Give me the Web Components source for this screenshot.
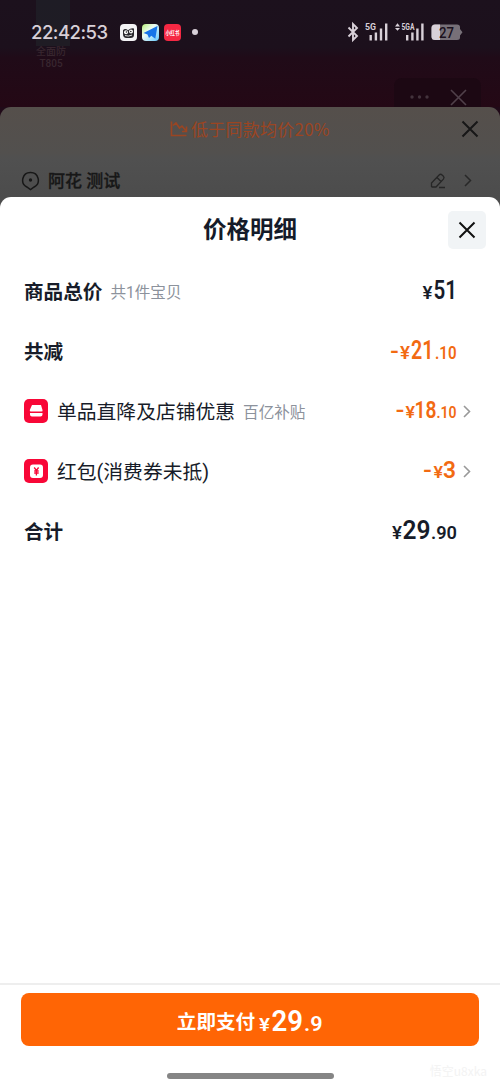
<!DOCTYPE html>
<html lang="zh-CN"><head><meta charset="utf-8"><title>价格明细</title>
<style>
html,body{margin:0;background:#200a18}
body{font-family:Roboto,"Noto Sans CJK SC",sans-serif;width:500px;height:1089px;overflow:hidden}
</style></head><body><price-page></price-page>
<script>
const define=(name,html)=>{
  const t=document.createElement('template');t.innerHTML=html;
  customElements.define(name,class extends HTMLElement{
    constructor(){super();this.attachShadow({mode:'open'}).append(t.content.cloneNode(true));}
  });
};
define('status-bar',`<style>
:host{display:flex;height:64px;align-items:center;padding:0 37px 0 31px;box-sizing:border-box;color:#d8d0d8;position:relative}
time{font:500 18.500px/24px Inter,sans-serif;width:78px;letter-spacing:-.5px;white-space:nowrap}
.apps{display:flex;gap:5px;margin-left:11px}.apps svg{display:block}
.dot{width:6px;height:6px;border-radius:50%;background:#d8d0d8;margin-left:11px}
.right{margin-left:auto}.right svg{display:block}
</style><time>22:42:53</time><div class="apps">
<svg width="17" height="17" viewBox="0 0 17 17"><rect width="17" height="17" rx="4" fill="#f3f3f5"/><path d="M3 6.2Q5 4 8 6.2Q11 3.5 14 4.4V11Q14 14 10.5 14H6.5Q3 14 3 10Z" fill="#29282d"/><circle cx="6" cy="8.2" r="2" fill="#fff"/><circle cx="11" cy="7.6" r="2" fill="#fff"/><circle cx="6.4" cy="8" r=".8" fill="#222"/><circle cx="10.8" cy="7.5" r=".8" fill="#222"/><path d="M5 11.5q3 1.4 7-.4" stroke="#fff" fill="none" stroke-width=".8"/></svg>
<svg width="17" height="17" viewBox="0 0 17 17"><defs><linearGradient id="g" x2="1" y2="1"><stop stop-color="#b7ef78"/><stop offset=".4" stop-color="#eefbf3"/><stop offset="1" stop-color="#62c8ff"/></linearGradient></defs><rect width="17" height="17" rx="4" fill="url(#g)"/><path d="M15.500 2 1.500 9l4 1.400L7 14l2.300-2.200 4 3Z" fill="#1675e8"/></svg>
<svg width="17" height="17" viewBox="0 0 17 17"><rect width="17" height="17" rx="4" fill="#f52843"/><text x="8.5" y="10.6" text-anchor="middle" textLength="14" lengthAdjust="spacingAndGlyphs" font-family="Noto Sans CJK SC,sans-serif" font-size="5.3" font-weight="700" fill="#fff">小红书</text></svg>
</div><i class="dot"></i><div class="right"><svg width="116" height="22" viewBox="0 0 116 22" fill="#d8d0d8" font-family="Roboto,sans-serif" font-weight="700"><path d="m1.500 6.500 8.500 8.500-4 4V3l4 4-8.500 8.500" fill="none" stroke="#d8d0d8" stroke-width="1.900"/>
<text x="18" y="8.8" font-size="8.5" textLength="11" lengthAdjust="spacingAndGlyphs">5G</text><path d="M22.5 14h2.4v5.5h-2.4zM27.7 11.5h2.4v8h-2.4zM32.8 7.5h2.4v12h-2.4zM38 2.5h2.4v17H38z"/>
<path d="m48 5.500 2.500-3.200L53 5.500zM48 7h5l-2.500 2.800z"/><text x="54.5" y="8.8" font-size="9" textLength="13" lengthAdjust="spacingAndGlyphs">5GA</text><path d="M59 14h2.4v5.5H59zM64.2 11.5h2.4v8h-2.4zM69.2 7.5h2.4v12h-2.4zM74.2 2.5h2.4v17h-2.4z"/>
<path d="M88 3.500h22q3 0 3 2.500v2l2.500 3.200-2.500 3.300v2q0 2.500-3 2.500H88q-3.500 0-3.500-3.500v-8.500Q84.500 3.500 88 3.500" fill="#777078"/><path d="M88 3.500h5V19h-5q-3.500 0-3.500-3.500v-8.500Q84.500 3.500 88 3.500"/><text x="92" y="16.8" font-size="15" fill="#1b111d" font-weight="500" textLength="15" lengthAdjust="spacingAndGlyphs">27</text></svg></div>`);
define('product-backdrop',`<style>
:host{display:block;height:107px;background:linear-gradient(#1c111d 0,#1c101c 48px,#200b18 58px,#240815)}
.shade{position:absolute;left:36px;top:0;width:34px;height:46px;background:linear-gradient(#1e1c25,#1f1c24)}.tag{position:absolute;left:28px;top:46px;width:46px;text-align:center;color:#38262f;font:500 10px/12px Roboto,"Noto Sans CJK SC",sans-serif;white-space:nowrap}
.menu{position:absolute;left:394px;top:78px;width:87px;height:29px;border-radius:8px 8px 0 0;background:#1c0813}
</style><div class="shade"></div><status-bar></status-bar><div class="tag">全面防<br>T805</div><svg class="menu" viewBox="0 0 87 29"><g fill="#43333c"><circle cx="18" cy="19" r="1.700"/><circle cx="25.500" cy="19" r="1.700"/><circle cx="33" cy="19" r="1.700"/></g><path d="m57 12 15 15m0-15L57 27" stroke="#50404a" stroke-width="1.600"/></svg>`);
define('order-peek',`<style>
:host{display:block;height:90px;border-radius:11px 11px 0 0;background:linear-gradient(#554f4b,#52504e 46px,#505050 52px,#4c4c4c);box-sizing:border-box}
.row{display:flex;align-items:center}.top{height:44px;padding:0 21px 0 170px}.promo{margin-left:3px;color:#9b4522;font:17px/24px "Noto Sans CJK SC",sans-serif;letter-spacing:.25px}.close{margin-left:auto}
.address{height:59px;padding:0 28px 0 21px}.address b{font-size:17px;line-height:24px;margin-left:8px;color:#171717;font-weight:500;-webkit-text-stroke:.3px;white-space:pre}.edit{margin-left:auto;margin-right:18px}svg{display:block;flex:none}
</style><div class="row top"><svg width="18" height="18" viewBox="0 0 18 18" fill="none" stroke="#9b4522" stroke-width="1.600"><path d="M1.500 1.500v14h15M3 5.500l3-2.500 3.500 5 2.500-2 4.500 5.500M16.500 6.500v5h-4.500"/></svg><span class="promo">低于同款均价20%</span><svg class="close" width="18" height="18" viewBox="0 0 18 18"><path d="m1.500 1.500 15 15m0-15-15 15" stroke="#171717" stroke-width="2"/></svg></div>
<div class="row address"><svg width="19" height="20" viewBox="0 0 19 20"><path d="M9.500 1.500A7.700 7.700 0 0 1 13.200 16L9.500 18.500 5.800 16A7.700 7.700 0 0 1 9.500 1.500Z" fill="none" stroke="#171717" stroke-width="1.500"/><circle cx="9.500" cy="9" r="1.700" fill="#171717"/></svg><b>阿花 测试</b><svg class="edit" width="16" height="16" viewBox="0 0 16 16" fill="none" stroke="#262626" stroke-width="1.300"><path d="M1.500 14v-4l7.600-8q1.500-1.500 3 0l1.300 1.300q1.300 1.400 0 2.800L6 14H1.500M7 4.500l4.500 4.500M9 14.500h6"/></svg><svg width="8" height="13" viewBox="0 0 8 13"><path d="m1 1 5.500 5.500L1 12" fill="none" stroke="#282828" stroke-width="1.500"/></svg></div>`);
define('sheet-header',`<style>:host{display:grid;height:65px;grid-template-columns:50px 1fr 50px;align-items:center;color:#151b29}h1{grid-column:2;text-align:center;margin:0;font-size:23.500px;line-height:32px;font-weight:700}button{border:0;background:#f1f4f6;border-radius:5px;width:38px;height:38px;padding:0;display:grid;place-items:center;margin-left:-2px}svg{display:block}</style><h1><slot></slot></h1><button aria-label="关闭"><svg width="18" height="18" viewBox="0 0 18 18"><path d="m1.500 1.500 15 15m0-15-15 15" stroke="#111" stroke-width="2"/></svg></button>`);
define('price-row',`<style>:host{display:flex;height:60px;align-items:center;padding:0 44px 0 24px;box-sizing:border-box;color:#171c29;white-space:nowrap}
.label{display:flex;align-items:center;font-size:19.800px;line-height:28px;padding-top:1px}:host([strong]) .label{font-weight:700;font-size:19.600px}::slotted([slot=icon]){margin-right:9px;margin-bottom:2px}.note{font-size:15.600px;color:#8c929c;font-weight:400;margin-left:8px}.price{margin-left:auto}::slotted([slot=arrow]){margin-right:-15px;margin-left:7px;margin-bottom:2px}</style><slot name="icon"></slot><span class="label"><slot></slot><span class="note"><slot name="note"></slot></span></span><span class="price"><slot name="price"></slot></span><slot name="arrow"></slot>`);
/* Each "parts" entry is text,start,size,width; start is measured inside the amount box. */
customElements.define('price-value',class extends HTMLElement{
 connectedCallback(){if(this.shadowRoot)return;const r=this.attachShadow({mode:'open'});
 const w=this.getAttribute('width')||70,base=this.getAttribute('base')||23;
 const parts=this.getAttribute('parts').split(' ').map(p=>{const [t,x,s,l]=p.split(',');return `<text x="${x}" y="${base}" font-size="${s}" textLength="${l}" lengthAdjust="spacingAndGlyphs">${t}</text>`}).join('');
 r.innerHTML=`<style>:host{display:block}svg{display:block;overflow:visible;font-family:Roboto,sans-serif;font-weight:600;fill:currentColor}</style><svg width="${w}" height="32">${parts}</svg>`;}
});
define('red-icon',`<style>:host{display:block;width:24px;height:24px;border-radius:5px;background:#f80737}</style><slot></slot>`);
define('row-arrow',`<style>:host{display:block}svg{display:block}</style><svg width="8" height="13" viewBox="0 0 8 13"><path d="m1 1 5.500 5.500L1 12" fill="none" stroke="#999" stroke-width="1.600"/></svg>`);
define('pay-footer',`<style>:host{display:flex;flex-direction:column;height:106px;border-top:2px solid #eee;box-sizing:border-box;padding:8px 21px 0;position:relative;align-items:center}button{border:0;border-radius:8px;background:#ff6505;height:53px;width:458px;color:#fff;display:flex;justify-content:center;align-items:center;padding:0;font-family:"Noto Sans CJK SC",sans-serif}.label{font-size:19.600px;font-weight:700;margin-right:4px;padding-top:2px}.handle{width:167px;height:6px;border-radius:3px;background:#858585;margin-top:27px}.mark{position:absolute;right:13px;bottom:9px;font:12px/18px "Noto Sans CJK SC",sans-serif;color:#f3f3f3}</style><button><span class="label">立即支付</span><price-value width="64" base="26.500" parts="¥,0,19,11 29,12.500,30,31.500 .9,45,20,18.500"></price-value></button><i class="handle"></i><span class="mark">悟空u8xka</span>`);
define('price-page',`<style>:host{display:flex;flex-direction:column;width:500px;height:1089px;position:relative}.sheet{height:892px;display:flex;flex-direction:column;border-radius:11px 11px 0 0;background:#fff}.under{background:#4c4c4c}.content{flex:1}.orange{color:#f26a12}svg{display:block}</style>
<product-backdrop></product-backdrop><order-peek></order-peek><div class="under"><main class="sheet"><sheet-header>价格明细</sheet-header><div class="content">
<price-row strong>商品总价<span slot="note">共1件宝贝</span><price-value slot="price" parts="¥,36.500,18,10 51,47.500,25,23.500"></price-value></price-row>
<price-row strong>共减<price-value class="orange" slot="price" parts="-,4,22,9 ¥,14,18,10 21,25,25,22.500 .10,49,18,21.500"></price-value></price-row>
<price-row><red-icon slot="icon"><svg width="24" height="24" viewBox="0 0 24 24" fill="#fff"><path d="M8 6h9l1.500 5q.5 1.500-1 1.500H7q-1.500 0-1.200-1.500zM6 14h12.500v1.500q0 2-2 2H8q-2 0-2-2z"/></svg></red-icon>单品直降及店铺优惠<span slot="note">百亿补贴</span><price-value class="orange" slot="price" base="22" parts="-,9.500,22,9 ¥,19.500,17,9.500 18,28.500,23,22 .10,50.500,17,20"></price-value><row-arrow slot="arrow"></row-arrow></price-row>
<price-row><red-icon slot="icon"><svg width="24" height="24" viewBox="0 0 24 24"><rect x="6" y="5.500" width="13" height="13.500" rx="3" fill="#fff"/><path d="m10.200 8.500 2.200 3 2.200-3M12.400 11.500v5M10.200 12h4.500M10.200 14h4.500" stroke="#f80737" stroke-width="1.300" fill="none"/></svg></red-icon>红包(消费券未抵)<price-value class="orange" slot="price" base="22" parts="-,37,22,9 ¥,47.500,17,9.500 3,57,23,13"></price-value><row-arrow slot="arrow"></row-arrow></price-row>
<price-row strong>合计<price-value slot="price" parts="¥,6,18,10 29,16.500,25,28 .90,45,18,26"></price-value></price-row></div><pay-footer></pay-footer></main></div>`);
</script></body></html>
